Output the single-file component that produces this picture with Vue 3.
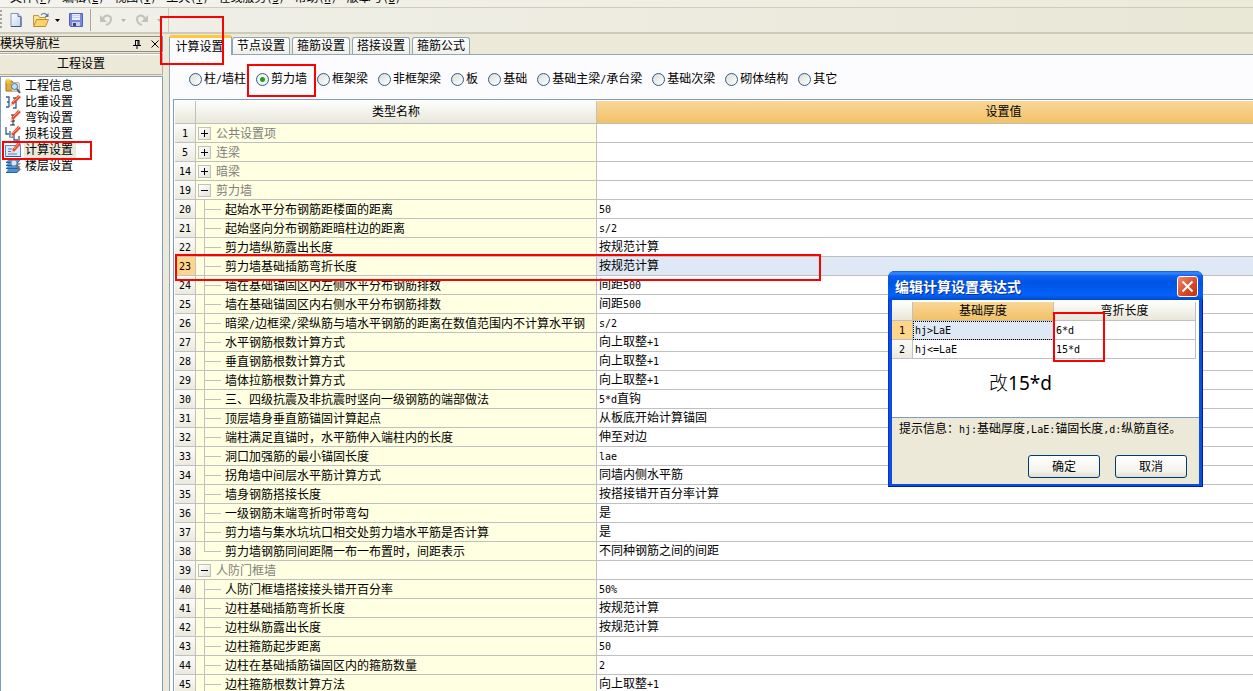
<script setup>
import { ref, h } from 'vue'

// Splits a label so that Latin runs are set in the narrow fixed-width face.
const Mix = (props) =>
  h('span', props.text.split(/([\x21-\x7e]+)/).filter(Boolean).map((part) =>
    /^[\x21-\x7e]/.test(part) ? h('span', { class: 'latin' }, part) : part))
Mix.props = ['text']

const menus = [['文件', 'F'], ['编辑', 'E'], ['视图', 'V'], ['工具', 'T'], ['在线服务', 'S'], ['帮助', 'H'], ['版本号', 'B']]
const navItems = ['工程信息', '比重设置', '弯钩设置', '损耗设置', '计算设置', '楼层设置']
const activeNav = ref(4)
const tabs = ['计算设置', '节点设置', '箍筋设置', '搭接设置', '箍筋公式']
const activeTab = ref(0)
const members = ['柱/墙柱', '剪力墙', '框架梁', '非框架梁', '板', '基础', '基础主梁/承台梁', '基础次梁', '砌体结构', '其它']
const member = ref('剪力墙')
const rows = [
  { n: 1, name: '公共设置项', group: '+' },
  { n: 5, name: '连梁', group: '+' },
  { n: 14, name: '暗梁', group: '+' },
  { n: 19, name: '剪力墙', group: '-' },
  { n: 20, name: '起始水平分布钢筋距楼面的距离', value: '50' },
  { n: 21, name: '起始竖向分布钢筋距暗柱边的距离', value: 's/2' },
  { n: 22, name: '剪力墙纵筋露出长度', value: '按规范计算' },
  { n: 23, name: '剪力墙基础插筋弯折长度', value: '按规范计算', selected: true },
  { n: 24, name: '墙在基础锚固区内左侧水平分布钢筋排数', value: '间距500' },
  { n: 25, name: '墙在基础锚固区内右侧水平分布钢筋排数', value: '间距500' },
  { n: 26, name: '暗梁/边框梁/梁纵筋与墙水平钢筋的距离在数值范围内不计算水平钢', value: 's/2' },
  { n: 27, name: '水平钢筋根数计算方式', value: '向上取整+1' },
  { n: 28, name: '垂直钢筋根数计算方式', value: '向上取整+1' },
  { n: 29, name: '墙体拉筋根数计算方式', value: '向上取整+1' },
  { n: 30, name: '三、四级抗震及非抗震时竖向一级钢筋的端部做法', value: '5*d直钩' },
  { n: 31, name: '顶层墙身垂直筋锚固计算起点', value: '从板底开始计算锚固' },
  { n: 32, name: '端柱满足直锚时，水平筋伸入端柱内的长度', value: '伸至对边' },
  { n: 33, name: '洞口加强筋的最小锚固长度', value: 'lae' },
  { n: 34, name: '拐角墙中间层水平筋计算方式', value: '同墙内侧水平筋' },
  { n: 35, name: '墙身钢筋搭接长度', value: '按搭接错开百分率计算' },
  { n: 36, name: '一级钢筋末端弯折时带弯勾', value: '是' },
  { n: 37, name: '剪力墙与集水坑坑口相交处剪力墙水平筋是否计算', value: '是' },
  { n: 38, name: '剪力墙钢筋同间距隔一布一布置时，间距表示', value: '不同种钢筋之间的间距', last: true },
  { n: 39, name: '人防门框墙', group: '-' },
  { n: 40, name: '人防门框墙搭接接头错开百分率', value: '50%' },
  { n: 41, name: '边柱基础插筋弯折长度', value: '按规范计算' },
  { n: 42, name: '边柱纵筋露出长度', value: '按规范计算' },
  { n: 43, name: '边柱箍筋起步距离', value: '50' },
  { n: 44, name: '边柱在基础插筋锚固区内的箍筋数量', value: '2' },
  { n: 45, name: '边柱箍筋根数计算方法', value: '向上取整+1' },
]
</script>

<template>
  <div class="app">
    <nav class="menubar">
      <a v-for="m in menus" :key="m[0]" href="#">{{ m[0] }}<span class="latin">(<u>{{ m[1] }}</u>)</span></a>
    </nav>
    <div class="toolbar">
      <i class="grip"></i>
      <button aria-label="新建">
        <svg width="16" height="16" viewBox="0 0 16 16"><defs><linearGradient id="pg" x2="1" y2="1"><stop stop-color="#fff"/><stop offset="1" stop-color="#bcd2f2"/></linearGradient></defs><path d="M3 1.500h7l3 3v10H3z" fill="url(#pg)" stroke="#8597b8"/><path d="M10 1.500v3h3" fill="#dce7fa" stroke="#5f759e"/><path d="M3 14.500h10V5" fill="none" stroke="#3f577f"/></svg>
      </button>
      <button class="open" aria-label="打开">
        <svg width="18" height="16" viewBox="0 0 18 16"><path d="M1.500 13.500V3.500h5l1 2h6v3" fill="#f8e49b" stroke="#c59a3c"/><path d="M1.500 14.500l3-7h12l-3 7z" fill="#fbd36b" stroke="#c28e2b"/><path d="M9 3c2-2.500 4-2 6 0" fill="none" stroke="#6b8fb2" stroke-width="1.300"/><path d="M16.500 1v4h-4z" fill="#54799c"/></svg>
      </button>
      <svg class="arrow" width="5" height="3"><path d="M0 0h5L2.500 3z" fill="#000"/></svg>
      <button class="save" aria-label="保存">
        <svg width="16" height="16" viewBox="0 0 16 16"><path d="M1.500 1.500h13v13h-12l-1-1z" fill="#7b88dc" stroke="#5261bb"/><path d="M4 2h8v6H4z" fill="#e8eefc"/><path d="M4 3.500h8M4 5.500h8" stroke="#c5d2ee"/><path d="M4 10h8v4H4z" fill="#c8cce4"/><path d="M5 11h3v3H5z" fill="#3a4590"/></svg>
      </button>
      <i class="sep"></i>
      <button class="undo" aria-label="撤销" disabled>
        <svg width="14" height="14" viewBox="0 0 14 14"><path d="M4 6c2-5 8-4 8 0 0 3-2 5-5 6" fill="none" stroke="#c3c2b9" stroke-width="2"/><path d="M1 2v7h7z" fill="#c3c2b9"/></svg>
      </button>
      <svg class="arrow" width="5" height="3"><path d="M0 0h5L2.500 3z" fill="#b5b4aa"/></svg>
      <button class="redo" aria-label="重做" disabled>
        <svg width="14" height="14" viewBox="0 0 14 14"><path d="M10 6C8 1 2 2 2 6c0 3 2 5 5 6" fill="none" stroke="#c3c2b9" stroke-width="2"/><path d="M13 2v7H6z" fill="#c3c2b9"/></svg>
      </button>
      <svg class="arrow" width="5" height="3"><path d="M0 0h5L2.500 3z" fill="#b5b4aa"/></svg>
      <i class="bar-end"></i>
    </div>

    <div class="body">
      <aside class="dock">
        <div class="caption">
          <span>模块导航栏</span>
          <button class="pin" aria-label="固定"><svg width="8" height="9" viewBox="0 0 8 9"><path d="M2 .500h4M2.500 0v5M5 0v5M6 0v5M0 5.500h8M4 6v3" fill="none" stroke="#000"/></svg></button>
          <button aria-label="关闭"><svg width="8" height="8" viewBox="0 0 8 8"><path d="M.500.500l7 7M7.500.500l-7 7" stroke="#000"/></svg></button>
        </div>
        <button class="section">工程设置</button>
        <ul>
          <li v-for="(item, i) in navItems" :key="item" :class="{ on: i === activeNav }">
            <svg v-if="i === 0" width="16" height="16" viewBox="0 0 16 16"><path d="M1 3h6l1 2h6v8H1z" fill="#e0ad3d" stroke="#9c7120"/><path d="M7 5h7v8H7z" fill="#d9dde2"/><path d="M3 0v6M0 3h6M1 1l4 4M5 1L1 5" stroke="#f6cf31"/><circle cx="9.500" cy="8.500" r="3" fill="#bfe0fa" stroke="#48759c"/><path d="M12 11l3 4" stroke="#4a5c74" stroke-width="2"/></svg>
            <svg v-else-if="i === 1" width="16" height="16" viewBox="0 0 16 16"><path d="M1 3h3v10M1 13h3M8 4h3v10H8M2 8h2M9 8h2" fill="none" stroke="#305c9c" stroke-width="1.300"/><path d="M6 9L13 1l3 2-8 8z" fill="#e84a30"/><path d="M8 8l6-6" stroke="#ff9c80"/><path d="M6 9l-1 4 3-2z" fill="#f5cb9a"/></svg>
            <svg v-else-if="i === 2" width="16" height="16" viewBox="0 0 16 16"><path d="M6 5h4M8 5v10M5 15h5M6 11h4" fill="none" stroke="#222"/><path d="M6 8L13 0l3 2-8 8z" fill="#e84a30"/><path d="M8 7l6-6" stroke="#ff9c80"/><path d="M6 8l-1 4 3-2z" fill="#f5cb9a"/></svg>
            <svg v-else-if="i === 3" width="16" height="16" viewBox="0 0 16 16"><path d="M1 1v7h3M5 5v6h3M9 8v6h4M14 10v5" fill="none" stroke="#305c9c" stroke-width="1.300"/><path d="M6 8L13 0l3 2-8 8z" fill="#e84a30"/><path d="M8 7l6-6" stroke="#ff9c80"/><path d="M6 8l-1 4 3-2z" fill="#f5cb9a"/></svg>
            <svg v-else-if="i === 4" width="16" height="16" viewBox="0 0 16 16"><path d="M.500 3.500h15v11H.500z" fill="#dceafc" stroke="#5b87c5"/><path d="M1 14.500h15" stroke="#31598f"/><path d="M3 7h4M3 9.500h3M3 12h9" stroke="#4f7dc0"/><path d="M7 8L13 0l3 2-7 8z" fill="#e84a30"/><path d="M9 7l5-6" stroke="#ff9c80"/><path d="M7 8l-1 4 3-2z" fill="#f5cb9a"/></svg>
            <svg v-else width="16" height="16" viewBox="0 0 16 16"><path d="M4 1h11l-2 3H1zM3 5h12l-2 2H1zM3 8h12l-2 2H1zM3 11h12l-3 4H1z" fill="#4e92d2"/><path d="M1 4.500h12l2-3M1 7.500h12l2-2M1 10.500h12l2-2M1 14.500h11l3-3" fill="none" stroke="#2a5f9c"/><circle cx="9" cy="5" r="3" fill="#d4eafb" stroke="#7895ac"/><path d="M11 7l4 5" stroke="#8a6a48" stroke-width="2"/></svg>
            <a href="#" @click.prevent="activeNav = i">{{ item }}</a>
          </li>
        </ul>
      </aside>

      <main>
        <div class="tabs" role="tablist">
          <button v-for="(t, i) in tabs" :key="t" role="tab" :aria-selected="i === activeTab" :class="{ active: i === activeTab }" @click="activeTab = i">{{ t }}</button>
        </div>
        <div class="page">
          <div class="radios">
            <label v-for="m in members" :key="m"><input v-model="member" type="radio" name="member" :value="m"><Mix :text="m" /></label>
          </div>
          <div class="grid-wrap">
            <table class="grid">
              <colgroup><col class="c-num"><col class="c-name"><col></colgroup>
              <thead><tr><th></th><th>类型名称</th><th class="hot">设置值</th></tr></thead>
              <tbody>
                <tr v-for="r in rows" :key="r.n" :class="{ selected: r.selected }">
                  <th><span class="latin">{{ r.n }}</span></th>
                  <td class="name" :class="r.group ? 'group' : 'child'">
                    <div>
                      <button v-if="r.group" class="toggle" :class="{ open: r.group === '-' }" :aria-label="r.name"></button>
                      <i v-else class="branch" :class="{ last: r.last }"></i>
                      <Mix :text="r.name" />
                    </div>
                  </td>
                  <td class="value"><Mix :text="r.value || ''" /></td>
                </tr>
              </tbody>
            </table>
          </div>
        </div>
      </main>
    </div>

    <section class="dialog" role="dialog" aria-label="编辑计算设置表达式">
      <header>
        <h2>编辑计算设置表达式</h2>
        <button aria-label="关闭"><svg width="13" height="13" viewBox="0 0 13 13"><path d="M1.500 1.500l10 10M11.500 1.500l-10 10" stroke="#fff" stroke-width="2"/></svg></button>
      </header>
      <div class="client">
        <div class="sheet">
          <table>
            <colgroup><col class="d-num"><col class="d-a"><col class="d-b"></colgroup>
            <thead><tr><th></th><th class="hot">基础厚度</th><th>弯折长度</th></tr></thead>
            <tbody>
              <tr><th class="cur"><span class="latin">1</span></th><td class="focus"><span class="latin">hj&gt;LaE</span></td><td><span class="latin">6*d</span></td></tr>
              <tr><th><span class="latin">2</span></th><td><span class="latin">hj&lt;=LaE</span></td><td><span class="latin">15*d</span></td></tr>
            </tbody>
          </table>
          <p class="remark">改<span>15*d</span></p>
        </div>
        <p class="tip"><Mix text="提示信息：hj:基础厚度,LaE:锚固长度,d:纵筋直径。" /></p>
        <div class="actions"><button>确定</button><button>取消</button></div>
      </div>
    </section>

    <i class="mark m-tab"></i>
    <i class="mark m-radio"></i>
    <i class="mark m-nav"></i>
    <i class="mark m-row"></i>
    <i class="mark m-cells"></i>
  </div>
</template>

<style>
body { overflow: hidden; }
.latin { font: 10px "DejaVu Sans Mono", "Liberation Mono", monospace; }
</style>

<style scoped>
* { box-sizing: border-box; }
.app { position: relative; height: 100vh; overflow: hidden; display: flex; flex-direction: column; background: #ece9d8; color: #000; font: 12px/16px "Liberation Sans", "Noto Sans CJK SC", sans-serif; }
button { font: inherit; color: inherit; padding: 0; border: 0; background: none; }
a { color: inherit; text-decoration: none; }
p, ul, h2 { margin: 0; padding: 0; }
table { border-collapse: separate; border-spacing: 0; table-layout: fixed; width: 100%; }
th, td { padding: 0; font-weight: normal; white-space: nowrap; overflow: hidden; }

.menubar { flex: none; height: 8px; display: flex; align-items: flex-end; gap: 10px; padding: 0 0 1px 10px; overflow: hidden; background: linear-gradient(90deg, #f4f3ee, #ecead9); border-bottom: 1px solid #cfccbe; }
.toolbar { flex: none; height: 26px; display: flex; align-items: center; background: linear-gradient(90deg, #f1f0ea, #e9e7d6); border-bottom: 2px solid #cdcab9; }
.toolbar button, .toolbar svg { display: block; flex: none; }
.grip { width: 2px; height: 20px; margin-right: 6px; background: repeating-linear-gradient(#a5a395 0 2px, transparent 2px 4px); }
.open { margin-left: 8px; }
.arrow { margin-left: 5px; }
.save { margin-left: 8px; }
.sep { width: 1px; height: 22px; margin: 0 8px 0 6px; background: #a9a798; }
.undo { margin-right: 3px; }
.redo { margin: 0 3px 0 9px; }
.bar-end { width: 1px; height: 24px; margin-left: 6px; background: #cbc9ba; }

.body { flex: 1; min-height: 0; display: flex; gap: 6px; }
.dock { flex: none; width: 163px; display: flex; flex-direction: column; padding-top: 2px; }
.caption { display: flex; align-items: center; height: 16px; padding-right: 3px; border: 1px solid #8d8b80; border-left: 0; margin-bottom: 1px; }
.caption span { flex: 1; }
.caption svg { display: block; }
.pin { margin-right: 10px; }
.section { height: 22px; border: 1px solid #b3b1a5; border-left: 0; box-shadow: inset 0 1px #fff; }
.dock ul { flex: 1; margin-top: 1px; padding: 1px 4px; background: #fff; border: 1px solid #7f9db9; border-bottom: 0; list-style: none; }
.dock li { display: flex; align-items: center; gap: 3px; height: 16px; }
.dock li a { padding: 0 3px 0 1px; }
.dock li.on a { background: #ece9d8; }

main { flex: 1; min-width: 0; display: flex; flex-direction: column; padding-top: 1px; overflow: hidden; }
.tabs { display: flex; align-items: flex-end; gap: 2px; height: 19px; }
.tabs button { height: 17px; width: 58px; border: 1px solid #91a7b4; border-bottom: 0; border-radius: 3px 3px 0 0; background: linear-gradient(#fff, #f0f0ea); }
.tabs .active { position: relative; z-index: 1; width: 63px; height: 20px; margin: 0 -2px -1px 0; padding-right: 2px; border-top: 3px solid #ffc73c; background: #fcfcfe; }
.page { flex: 1; min-height: 0; border: 1px solid #91a7b4; border-right: 0; border-bottom: 0; background: #fcfcfe; padding-left: 3px; }
.radios { display: flex; gap: 10px; height: 44px; padding: 4px 0 0 16px; align-items: center; }
.radios label { display: flex; align-items: center; gap: 2px; white-space: nowrap; }
.radios input { appearance: none; flex: none; width: 13px; height: 13px; margin: 0; border: 1px solid #2a5c8e; border-radius: 50%; background: linear-gradient(135deg, #dcdcd7, #fff); }
.radios input:checked { background: radial-gradient(circle, #21a121 0 2px, #f4f4f0 3px); }
/* The value column runs on past the right edge of the window. */
.grid-wrap { margin-right: -158px; border: 1px solid #7f9db9; border-right: 0; padding: 1px 0 0 1px; background: #fff; }
.c-num { width: 21px; }
.c-name { width: 401px; }
thead th { height: 23px; background: linear-gradient(#fdfdfc, #e9e7da); border-right: 1px solid #c0c0c0; border-bottom: 1px solid #c0c0c0; }
thead th.hot { background: linear-gradient(#f9d798, #f2c165); }
tbody th { height: 19px; text-align: center; background: linear-gradient(#fbfbf9, #eceade); border-right: 1px solid #c0c0c0; border-bottom: 1px solid #c0c0c0; }
td { height: 19px; border-bottom: 1px solid #c0c0c0; }
.grid tbody th, .grid td { line-height: 16px; }
.name { background: #ffffe1; border-right: 1px solid #c0c0c0; }
.name div { display: flex; align-items: center; height: 18px; padding-top: 1px; }
.group { color: #808080; }
.toggle { position: relative; flex: none; width: 13px; height: 13px; margin: 0 5px 0 2px; border: 1px solid #c0c0c0; background: linear-gradient(135deg, #fff, #e4e3da); }
.toggle::before, .toggle:not(.open)::after { content: ""; position: absolute; left: 2px; top: 5px; width: 7px; height: 1px; background: #000; }
.toggle:not(.open)::after { left: 5px; top: 2px; width: 1px; height: 7px; }
.branch { flex: none; align-self: stretch; width: 17px; margin: -1px 4px 0 8px; border-left: 1px solid #c0c0c0; background: linear-gradient(#c0c0c0, #c0c0c0) 0 9px / 100% 1px no-repeat; }
.branch.last { align-self: flex-start; height: 10px; }
.value { padding-left: 2px; background: #fff; }
.selected .value { background: #dfe9f5; }
.selected th { background: #ffd58a; }

.dialog { position: absolute; z-index: 1; left: 888px; top: 271px; width: 315px; padding: 0 4px 3px; border-radius: 7px 7px 0 0; background: #0a4fe0; box-shadow: inset -1px -1px #001f9e, inset 1px 0 #0831d9; }
.dialog header { display: flex; align-items: center; justify-content: space-between; height: 29px; margin: 0 -4px; padding: 2px 5px 0 7px; border-radius: 7px 7px 0 0; background: linear-gradient(#0a5be8, #3a8cf8 2px, #0a5ff0 5px, #0054e3 12px, #0262fb 24px, #0049cc); }
.dialog h2 { font-size: 14px; line-height: 18px; font-weight: bold; color: #fff; text-shadow: 1px 1px #0a2f8c; }
.dialog header button { display: grid; place-items: center; width: 21px; height: 21px; border: 1px solid #fff; border-radius: 3px; background: linear-gradient(135deg, #ee8a6c, #d84622 60%, #bf3514); }
.client { height: 184px; background: #ece9d8; }
.sheet { height: 118px; padding: 2px 3px 0 0; background: #fff; border-bottom: 1px solid #7f9db9; }
.sheet thead th { height: 19px; line-height: 16px; }
.d-num { width: 21px; }
.d-a { width: 141px; }
.sheet td { border-right: 1px solid #c0c0c0; line-height: 16px; padding-left: 2px; }
.sheet th.cur { background: #ffd58a; }
.sheet td.focus { background: #dfe9f5; outline: 1px dotted #000; outline-offset: -1px; }
.remark { padding: 12px 0 0 97px; font: 19px/24px "Noto Sans", "Noto Sans CJK SC", sans-serif; font-weight: 300; }
.remark span { font-weight: 400; }
.tip { padding: 3px 0 0 7px; white-space: nowrap; }
.actions { display: flex; justify-content: flex-end; gap: 15px; padding: 18px 12px 0 0; }
.actions button { width: 72px; height: 23px; border: 1px solid #003c74; border-radius: 3px; background: linear-gradient(#fff, #f5f4ee 70%, #e0ddd2); }

.mark { position: absolute; z-index: 2; border: 2px solid #f00; pointer-events: none; }
.m-tab { left: 160px; top: 16px; width: 64px; height: 49px; }
.m-radio { left: 247px; top: 64px; width: 69px; height: 33px; }
.m-nav { left: 2px; top: 141px; width: 90px; height: 19px; }
.m-row { left: 175px; top: 254px; width: 646px; height: 27px; }
.m-cells { left: 1053px; top: 312px; width: 52px; height: 50px; }
</style>
